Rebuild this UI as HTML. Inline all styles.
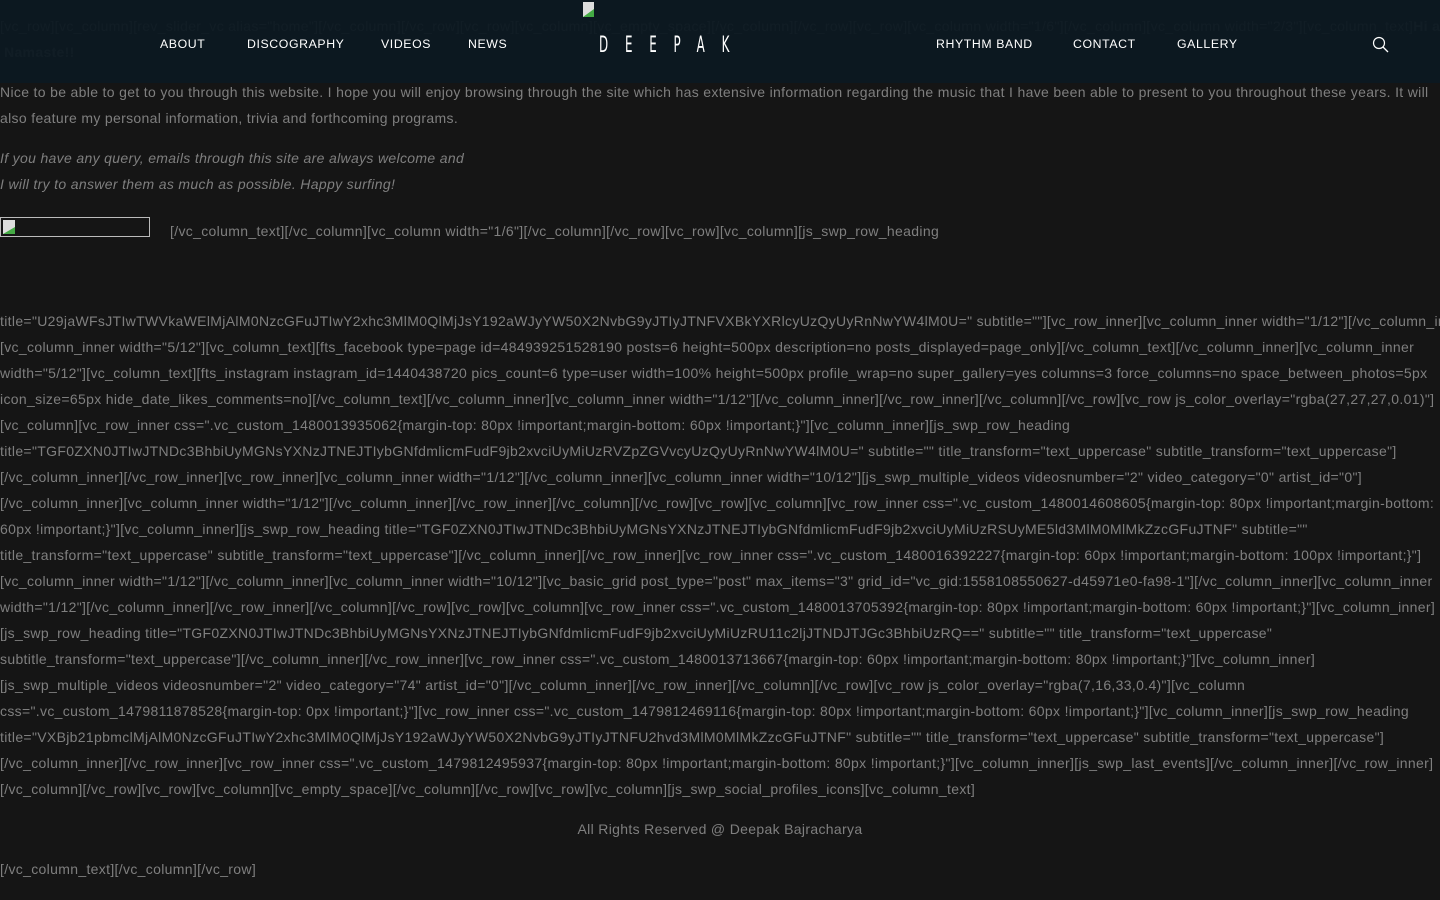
<!DOCTYPE html>
<html><head><meta charset="utf-8"><style>
html,body{margin:0;padding:0;}
body{background:#151515;color:#7f7f7f;font-family:"Liberation Sans",sans-serif;font-size:14px;letter-spacing:0.33px;width:1440px;height:900px;overflow:hidden;position:relative;}
.l{position:absolute;left:0;white-space:nowrap;line-height:26px;height:26px;}
.c{left:0;width:1440px;text-align:center;}
i{font-style:italic}
header{position:absolute;left:0;top:0;width:1440px;height:83px;background:rgba(12,25,33,0.96);letter-spacing:0;}
nav a{position:absolute;top:37px;color:#fff;font-size:12.3px;letter-spacing:0.6px;text-decoration:none;line-height:15px;}
.logo{position:absolute;left:599px;top:33px;color:#fff;font-size:22px;letter-spacing:28px;font-weight:300;transform:scaleX(0.6);transform-origin:left;line-height:26px;font-family:"DejaVu Sans Condensed","Liberation Sans",sans-serif;}
.bimg{position:absolute;left:582px;top:2px;width:16px;height:16px;}
.box{position:absolute;left:0;top:217px;width:148px;height:18px;border:1px solid #bbb;}
</style></head><body>
<div class="l" style="top:13px">[vc_row][vc_column][rev_slider_vc alias="home"][/vc_column][/vc_row][vc_row][vc_column][vc_empty_space][/vc_column][/vc_row][vc_row][vc_column width="1/6"][/vc_column][vc_column width="2/3"][vc_column_text]<b>Hi all!</b></div>
<div class="l" style="top:39px;left:4px"><b>Namaste!!</b></div>
<div class="l" style="top:79px">Nice to be able to get to you through this website. I hope you will enjoy browsing through the site which has extensive information regarding the music that I have been able to present to you throughout these years. It will</div>
<div class="l" style="top:105px">also feature my personal information, trivia and forthcoming programs.</div>
<div class="l" style="top:145px"><i>If you have any query, emails through this site are always welcome and</i></div>
<div class="l" style="top:171px"><i>I will try to answer them as much as possible. Happy surfing!</i></div>
<div class="box"><svg width="16" height="16" style="position:absolute;left:1px;top:1px"><rect x="1" y="1" width="12" height="14" fill="#ddd"/><path d="M1 15 L13 8 L13 15Z" fill="#4a4"/></svg></div>
<div class="l" style="top:218px;left:170px">[/vc_column_text][/vc_column][vc_column width="1/6"][/vc_column][/vc_row][vc_row][vc_column][js_swp_row_heading</div>
<div class="l" style="top:308px">title="U29jaWFsJTIwTWVkaWElMjAlM0NzcGFuJTIwY2xhc3MlM0QlMjJsY192aWJyYW50X2NvbG9yJTIyJTNFVXBkYXRlcyUzQyUyRnNwYW4lM0U=" subtitle=""][vc_row_inner][vc_column_inner width="1/12"][/vc_column_inner]</div>
<div class="l" style="top:334px">[vc_column_inner width="5/12"][vc_column_text][fts_facebook type=page id=484939251528190 posts=6 height=500px description=no posts_displayed=page_only][/vc_column_text][/vc_column_inner][vc_column_inner</div>
<div class="l" style="top:360px">width="5/12"][vc_column_text][fts_instagram instagram_id=1440438720 pics_count=6 type=user width=100% height=500px profile_wrap=no super_gallery=yes columns=3 force_columns=no space_between_photos=5px</div>
<div class="l" style="top:386px">icon_size=65px hide_date_likes_comments=no][/vc_column_text][/vc_column_inner][vc_column_inner width="1/12"][/vc_column_inner][/vc_row_inner][/vc_column][/vc_row][vc_row js_color_overlay="rgba(27,27,27,0.01)"]</div>
<div class="l" style="top:412px">[vc_column][vc_row_inner css=".vc_custom_1480013935062{margin-top: 80px !important;margin-bottom: 60px !important;}"][vc_column_inner][js_swp_row_heading</div>
<div class="l" style="top:438px">title="TGF0ZXN0JTIwJTNDc3BhbiUyMGNsYXNzJTNEJTIybGNfdmlicmFudF9jb2xvciUyMiUzRVZpZGVvcyUzQyUyRnNwYW4lM0U=" subtitle="" title_transform="text_uppercase" subtitle_transform="text_uppercase"]</div>
<div class="l" style="top:464px">[/vc_column_inner][/vc_row_inner][vc_row_inner][vc_column_inner width="1/12"][/vc_column_inner][vc_column_inner width="10/12"][js_swp_multiple_videos videosnumber="2" video_category="0" artist_id="0"]</div>
<div class="l" style="top:490px">[/vc_column_inner][vc_column_inner width="1/12"][/vc_column_inner][/vc_row_inner][/vc_column][/vc_row][vc_row][vc_column][vc_row_inner css=".vc_custom_1480014608605{margin-top: 80px !important;margin-bottom:</div>
<div class="l" style="top:516px">60px !important;}"][vc_column_inner][js_swp_row_heading title="TGF0ZXN0JTIwJTNDc3BhbiUyMGNsYXNzJTNEJTIybGNfdmlicmFudF9jb2xvciUyMiUzRSUyME5ld3MlM0MlMkZzcGFuJTNF" subtitle=""</div>
<div class="l" style="top:542px">title_transform="text_uppercase" subtitle_transform="text_uppercase"][/vc_column_inner][/vc_row_inner][vc_row_inner css=".vc_custom_1480016392227{margin-top: 60px !important;margin-bottom: 100px !important;}"]</div>
<div class="l" style="top:568px">[vc_column_inner width="1/12"][/vc_column_inner][vc_column_inner width="10/12"][vc_basic_grid post_type="post" max_items="3" grid_id="vc_gid:1558108550627-d45971e0-fa98-1"][/vc_column_inner][vc_column_inner</div>
<div class="l" style="top:594px">width="1/12"][/vc_column_inner][/vc_row_inner][/vc_column][/vc_row][vc_row][vc_column][vc_row_inner css=".vc_custom_1480013705392{margin-top: 80px !important;margin-bottom: 60px !important;}"][vc_column_inner]</div>
<div class="l" style="top:620px">[js_swp_row_heading title="TGF0ZXN0JTIwJTNDc3BhbiUyMGNsYXNzJTNEJTIybGNfdmlicmFudF9jb2xvciUyMiUzRU11c2ljJTNDJTJGc3BhbiUzRQ==" subtitle="" title_transform="text_uppercase"</div>
<div class="l" style="top:646px">subtitle_transform="text_uppercase"][/vc_column_inner][/vc_row_inner][vc_row_inner css=".vc_custom_1480013713667{margin-top: 60px !important;margin-bottom: 80px !important;}"][vc_column_inner]</div>
<div class="l" style="top:672px">[js_swp_multiple_videos videosnumber="2" video_category="74" artist_id="0"][/vc_column_inner][/vc_row_inner][/vc_column][/vc_row][vc_row js_color_overlay="rgba(7,16,33,0.4)"][vc_column</div>
<div class="l" style="top:698px">css=".vc_custom_1479811878528{margin-top: 0px !important;}"][vc_row_inner css=".vc_custom_1479812469116{margin-top: 80px !important;margin-bottom: 60px !important;}"][vc_column_inner][js_swp_row_heading</div>
<div class="l" style="top:724px">title="VXBjb21pbmclMjAlM0NzcGFuJTIwY2xhc3MlM0QlMjJsY192aWJyYW50X2NvbG9yJTIyJTNFU2hvd3MlM0MlMkZzcGFuJTNF" subtitle="" title_transform="text_uppercase" subtitle_transform="text_uppercase"]</div>
<div class="l" style="top:750px">[/vc_column_inner][/vc_row_inner][vc_row_inner css=".vc_custom_1479812495937{margin-top: 80px !important;margin-bottom: 80px !important;}"][vc_column_inner][js_swp_last_events][/vc_column_inner][/vc_row_inner]</div>
<div class="l" style="top:776px">[/vc_column][/vc_row][vc_row][vc_column][vc_empty_space][/vc_column][/vc_row][vc_row][vc_column][js_swp_social_profiles_icons][vc_column_text]</div>
<div class="l c" style="top:816px">All Rights Reserved @ Deepak Bajracharya</div>
<div class="l" style="top:856px">[/vc_column_text][/vc_column][/vc_row]</div>
<header>
<svg class="bimg" viewBox="0 0 16 16"><rect x="1" y="0" width="11" height="15" fill="#ddd"/><path d="M1 15 L12 7 L12 15Z" fill="#4a4"/></svg>
<nav>
<a style="left:160px">ABOUT</a>
<a style="left:247px">DISCOGRAPHY</a>
<a style="left:381px">VIDEOS</a>
<a style="left:468px">NEWS</a>
<a style="left:936px">RHYTHM BAND</a>
<a style="left:1073px">CONTACT</a>
<a style="left:1177px">GALLERY</a>
</nav>
<div class="logo">DEEPAK</div>
<svg style="position:absolute;left:1372px;top:36px" width="18" height="18" viewBox="0 0 18 18"><circle cx="7" cy="7" r="5.5" fill="none" stroke="#fff" stroke-width="1.2"/><path d="M11 11 L16 16" stroke="#fff" stroke-width="1.3"/></svg>
</header>
</body></html>
